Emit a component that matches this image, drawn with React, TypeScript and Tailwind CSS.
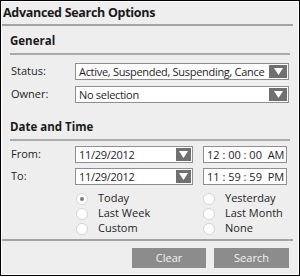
import React from "react";

const font = { fontFamily: '"Open Sans", "Noto Sans", sans-serif' };

function Caret() {
  return (
    <svg width="9" height="7" viewBox="0 0 9 7">
      <path d="M0 0 H9 L4.5 7 Z" fill="#ffffff" />
    </svg>
  );
}

function SelectBox({ value, className, btn = "w-[18px]" }: { value: string; className: string; btn?: string }) {
  return (
    <div className={`flex h-[17px] items-stretch border border-[#8f8f8f] bg-white ${className}`}>
      <div className="min-w-0 flex-1 overflow-hidden whitespace-nowrap pl-[3px] text-[11px] leading-[15px] tracking-[-0.3px] text-[#1e1e1e]">
        {value}
      </div>
      <div className={`m-[1px] flex items-center justify-center bg-[#707070] ${btn}`}>
        <Caret />
      </div>
    </div>
  );
}

function Radio({ label, checked }: { label: string; checked?: boolean }) {
  return (
    <div className="flex h-[15px] items-center">
      <span className="flex h-[12px] w-[12px] items-center justify-center rounded-full border border-[#d4d4d4] bg-white">
        {checked && <span className="h-[4px] w-[4px] rounded-full bg-[#7a7a7a]" />}
      </span>
      <span className="ml-[10px] text-[11px] text-[#1e1e1e]">{label}</span>
    </div>
  );
}

function Heading({ children, className }: { children: React.ReactNode; className: string }) {
  return (
    <div className={`h-[14px] text-[11.5px] font-bold leading-[14px] text-[#1a1a1a] ${className}`}>
      {children}
    </div>
  );
}

export default function App() {
  return (
    <div className="h-[277px] w-[300px] bg-white" style={font}>
      <div className="h-[276px] border border-black">
        <div className="flex h-full flex-col border border-white bg-[#eeeeee]">
          <div className="h-[22px] pl-[1px] text-[12.5px] font-bold leading-[22px] tracking-[-0.3px] text-[#1a1a1a]">
            Advanced Search Options
          </div>
          <div className="mr-[5px] h-[2px] bg-[#a3a3a3]" />

          <div className="px-[8px]">
            <Heading className="mt-[8px]">General</Heading>
            <div className="mt-[5px] h-[2px] bg-[#ababab]" />

            <div className="mt-[8px] flex items-center">
              <span className="w-[65px] pl-[1px] text-[11px] text-[#1e1e1e]">Status:</span>
              <SelectBox className="w-[214px]" value="Active, Suspended, Suspending, Cance" />
            </div>
            <div className="mt-[6px] flex items-center">
              <span className="w-[65px] pl-[1px] text-[11px] text-[#1e1e1e]">Owner:</span>
              <SelectBox className="w-[214px]" value="No selection" />
            </div>

            <Heading className="mt-[17px]">Date and Time</Heading>
            <div className="mt-[5px] h-[2px] bg-[#ababab]" />

            <div className="mt-[5px] flex items-center">
              <span className="w-[65px] pl-[1px] text-[11px] text-[#1e1e1e]">From:</span>
              <SelectBox className="w-[118px]" btn="w-[15px]" value="11/29/2012" />
              <div className="ml-[10px] h-[17px] w-[84px] whitespace-pre border border-[#8f8f8f] bg-white pl-[3px] text-[11px] leading-[15px] text-[#1e1e1e]">
                12 : 00 : 00  AM
              </div>
            </div>
            <div className="mt-[5px] flex items-center">
              <span className="w-[65px] pl-[1px] text-[11px] text-[#1e1e1e]">To:</span>
              <SelectBox className="w-[118px]" btn="w-[15px]" value="11/29/2012" />
              <div className="ml-[10px] h-[17px] w-[84px] whitespace-pre border border-[#8f8f8f] bg-white pl-[3px] text-[11px] leading-[15px] text-[#1e1e1e]">
                11 : 59 : 59  PM
              </div>
            </div>

            <div className="mt-[6px] grid grid-cols-[127px_1fr] pl-[66px]">
              <Radio label="Today" checked />
              <Radio label="Yesterday" />
              <Radio label="Last Week" />
              <Radio label="Last Month" />
              <Radio label="Custom" />
              <Radio label="None" />
            </div>
          </div>

          <div className="mr-[5px] mt-[3px] h-[2px] bg-[#a3a3a3]" />

          <div className="mt-[7px] flex justify-end gap-[8px] pr-[9px]">
            <button className="h-[20px] w-[74px] bg-[#8c8c8c] text-[11px] text-[#f2f2f2]">Clear</button>
            <button className="h-[20px] w-[75px] bg-[#8c8c8c] text-[11px] text-[#f2f2f2]">Search</button>
          </div>
        </div>
      </div>
    </div>
  );
}
